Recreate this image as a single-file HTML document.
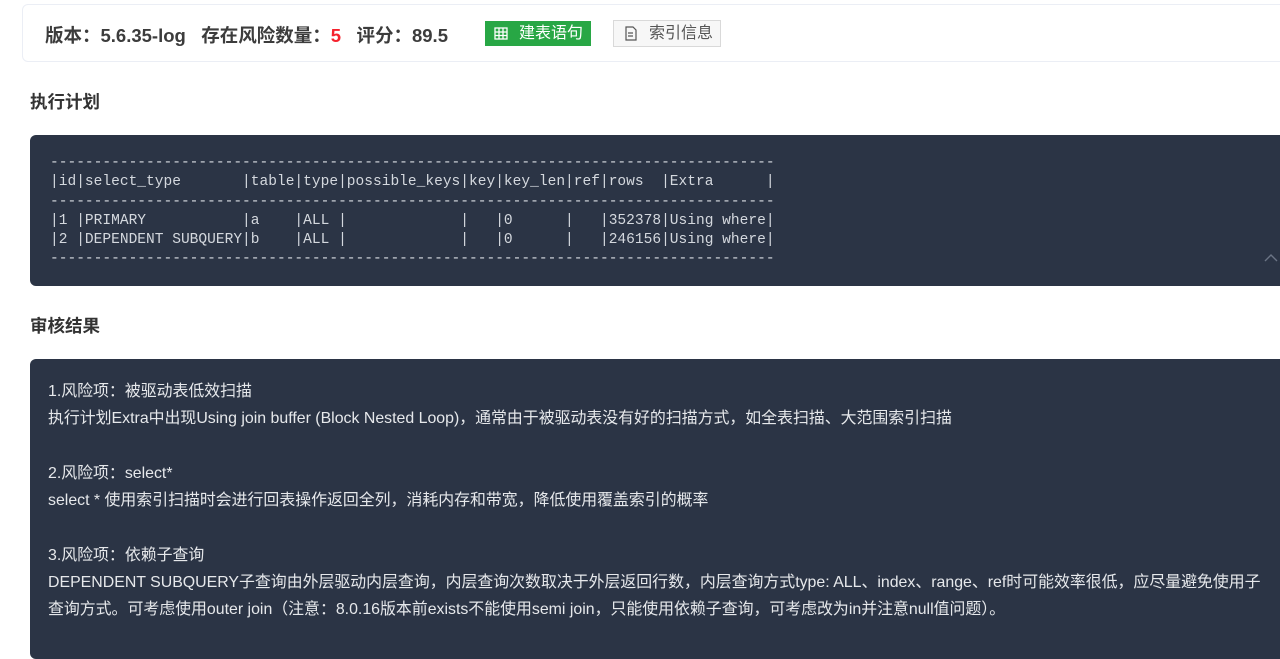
<!DOCTYPE html>
<html><head><meta charset="utf-8"><style>
body{margin:0;width:1280px;height:640px;overflow:hidden;background:#fff;font-family:"Liberation Sans","Noto Sans CJK SC",sans-serif;}
.card{position:absolute;left:22px;top:4px;width:1280px;height:56px;border:1px solid #ebeef5;border-radius:6px;}
.info{position:absolute;left:45px;top:22px;font-size:18.5px;font-weight:bold;color:#3c3c3c;white-space:nowrap;}
.info span.r{color:#f5222d}
.btn1{position:absolute;left:485px;top:21px;width:106px;height:25px;background:#28a745;color:#fff;font-size:16px;line-height:25px;box-sizing:border-box;padding-left:34px;}
.btn2{position:absolute;left:613px;top:20px;width:108px;height:27px;border:1px solid #d9d9d9;background:#f7f7f7;color:#555;font-size:16px;line-height:26px;box-sizing:border-box;padding-left:35px;}
h3{position:absolute;left:30px;margin:0;font-size:17.5px;font-weight:bold;color:#333;}
.dark{position:absolute;left:30px;width:1270px;background:#2b3445;border-radius:6px;}
pre{position:absolute;left:20px;top:19px;margin:0;font-family:"Liberation Mono",monospace;font-size:14.55px;line-height:19.3px;color:#d4d8de;}
.txt{position:absolute;left:18px;top:19px;font-size:15.9px;line-height:27.3px;color:#e6e8eb;white-space:nowrap;}
</style></head><body>
<div class="card"></div>
<div class="info">版本：5.6.35-log&nbsp;&nbsp;&nbsp;存在风险数量：<span class="r">5</span>&nbsp;&nbsp;&nbsp;评分：89.5</div>
<div class="btn1"><svg style="position:absolute;left:9px;top:6px" width="14" height="13" viewBox="0 0 14 13" fill="none" stroke="#fff" stroke-width="1.3"><rect x="1" y="1" width="12" height="11"/><path d="M1 5h12M1 8.5h12M5 1v11M9 1v11"/></svg>建表语句</div>
<div class="btn2"><svg style="position:absolute;left:11px;top:5px" width="12" height="15" viewBox="0 0 12 15" fill="none" stroke="#555" stroke-width="1.2"><path d="M1 1h7l3 3v10H1z M3 7h5M3 10h5"/></svg>索引信息</div>
<h3 style="top:89px">执行计划</h3>
<div class="dark" style="top:135px;height:151px;">
<pre>-----------------------------------------------------------------------------------
|id|select_type       |table|type|possible_keys|key|key_len|ref|rows  |Extra      |
-----------------------------------------------------------------------------------
|1 |PRIMARY           |a    |ALL |             |   |0      |   |352378|Using where|
|2 |DEPENDENT SUBQUERY|b    |ALL |             |   |0      |   |246156|Using where|
-----------------------------------------------------------------------------------</pre>
<svg style="position:absolute;left:1234px;top:118px" width="14" height="9" viewBox="0 0 14 9" fill="none" stroke="#6b7485" stroke-width="1.4"><path d="M1 8L7 2l6 6"/></svg>
</div>
<h3 style="top:313px">审核结果</h3>
<div class="dark" style="top:359px;height:300px;">
<div class="txt">1.风险项：被驱动表低效扫描<br>执行计划Extra中出现Using join buffer (Block Nested Loop)，通常由于被驱动表没有好的扫描方式，如全表扫描、大范围索引扫描<br><br>2.风险项：select*<br>select * 使用索引扫描时会进行回表操作返回全列，消耗内存和带宽，降低使用覆盖索引的概率<br><br>3.风险项：依赖子查询<br>DEPENDENT SUBQUERY子查询由外层驱动内层查询，内层查询次数取决于外层返回行数，内层查询方式type: ALL、index、range、ref时可能效率很低，应尽量避免使用子<br>查询方式。可考虑使用outer join（注意：8.0.16版本前exists不能使用semi join，只能使用依赖子查询，可考虑改为in并注意null值问题）。</div>
</div>
</body></html>
